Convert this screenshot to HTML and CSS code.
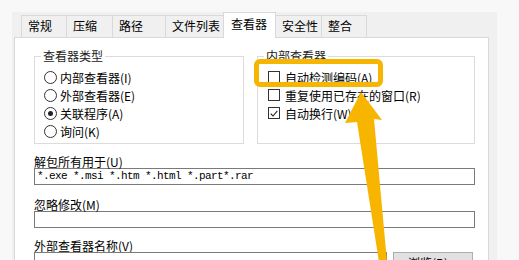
FILE: index.html
```html
<!DOCTYPE html>
<html lang="zh-CN">
<head>
<meta charset="utf-8">
<link rel="stylesheet" href="styles.css">
</head>
<body>
<div class="dialog">
  <div class="tabs">
    <div class="tab w45">常规</div>
    <div class="tab w46">压缩</div>
    <div class="tab w53">路径</div>
    <div class="tab w58">文件列表</div>
    <div class="tab w52 active">查看器</div>
    <div class="tab w46">安全性</div>
    <div class="tab w45">整合</div>
  </div>
  <div class="panel">
    <div class="groups">
      <fieldset class="group g1">
        <legend>查看器类型</legend>
        <div class="opt"><span class="radio"></span>内部查看器(I)</div>
        <div class="opt"><span class="radio"></span>外部查看器(E)</div>
        <div class="opt"><span class="radio on"></span>关联程序(A)</div>
        <div class="opt"><span class="radio"></span>询问(K)</div>
      </fieldset>
      <fieldset class="group g2">
        <legend>内部查看器</legend>
        <div class="opt"><span class="check"></span>自动检测编码(A)</div>
        <div class="opt"><span class="check"></span>重复使用已存在的窗口(R)</div>
        <div class="opt"><span class="check"><svg viewBox="0 0 12 12" width="11" height="11"><path d="M2 6.2 L4.8 9 L10 2.8" fill="none" stroke="#222" stroke-width="1.3"/></svg></span>自动换行(W)</div>
      </fieldset>
    </div>
    <div class="label l1">解包所有用于(U)</div>
    <div class="input mono">*.exe *.msi *.htm *.html *.part*.rar</div>
    <div class="label l2">忽略修改(M)</div>
    <div class="input"></div>
    <div class="label l3">外部查看器名称(V)</div>
    <div class="row">
      <div class="input short"></div>
      <div class="btn">浏览(B)...</div>
    </div>
  </div>
</div>
<div class="highlight"></div>
<svg class="arrow" width="519" height="260" viewBox="0 0 519 260">
  <polygon points="361,92 382,120 374,119 387,262 379,262 357,122 345,123" fill="#f7b500"/>
</svg>
</body>
</html>
```
FILE: styles.css
```css
* { box-sizing: border-box; }
html, body {
  margin: 0;
  padding: 0;
}
body {
  width: 519px;
  height: 260px;
  overflow: hidden;
  background: #f8f8f8;
  font-family: "Noto Sans CJK SC", "Noto Sans", sans-serif;
  font-size: 12px;
  color: #000;
  position: relative;
}
.dialog {
  margin: 12px 0 0 12px;
  width: 485px;
  height: 260px;
  background: #f0f0f0;
  padding: 0 8px 0 2px;
}
.tabs {
  display: flex;
  align-items: flex-end;
  height: 25px;
  margin-left: 7px;
  position: relative;
  z-index: 2;
}
.tab {
  height: 22px;
  border: 1px solid #d9d9d9;
  border-bottom: none;
  margin-right: -1px;
  padding-left: 6px;
  line-height: 20px;
  background: #f0f0f0;
  white-space: nowrap;
}
.tab.active {
  height: 26px;
  margin-bottom: -1px;
  background: #fff;
  line-height: 22px;
  padding-left: 7px;
}
.w45 { width: 46px; }
.w46 { width: 47px; }
.w52 { width: 53px; }
.w53 { width: 54px; }
.w58 { width: 59px; }
.panel {
  width: 475px;
  height: 240px;
  background: #fff;
  border: 1px solid #d9d9d9;
  padding: 11px 0 0 19px;
}
.groups {
  display: flex;
}
.group {
  margin: 0;
  border: 1px solid #dcdcdc;
  padding: 5px 0 3px 9px;
  min-width: 0;
}
.group legend {
  padding: 0 2px;
  line-height: 14px;
  color: #222;
}
.g1 { width: 210px; }
.g1 legend { margin-left: -3px; }
.g2 {
  width: 218px;
  margin-left: 13px;
  padding-left: 10px;
}
.g2 legend { margin-left: -4px; }
.opt {
  height: 18px;
  display: flex;
  align-items: center;
  white-space: nowrap;
}
.radio {
  width: 13px;
  height: 13px;
  border: 1px solid #333;
  border-radius: 50%;
  background: #fff;
  margin-right: 3px;
  display: flex;
  align-items: center;
  justify-content: center;
}
.radio.on::after {
  content: "";
  width: 5px;
  height: 5px;
  border-radius: 50%;
  background: #222;
}
.check {
  width: 12px;
  height: 12px;
  border: 1px solid #333;
  background: #fff;
  margin-right: 5px;
  display: flex;
  align-items: center;
  justify-content: center;
}
.check svg { display: block; }
.label {
  line-height: 13px;
  height: 13px;
  white-space: nowrap;
}
.l1 { margin-top: 11px; }
.l2 { margin-top: 13px; }
.l3 { margin-top: 11px; }
.input {
  width: 441px;
  height: 17px;
  border: 1px solid #7a7a7a;
  background: #fff;
  padding-left: 2px;
  line-height: 15px;
}
.mono {
  font-family: "Liberation Mono", monospace;
  font-size: 11px;
  letter-spacing: -0.6px;
  white-space: nowrap;
}
.row {
  display: flex;
  align-items: flex-start;
}
.input.short { width: 353px; }
.btn {
  width: 80px;
  height: 22px;
  margin-left: 6px;
  background: #e1e1e1;
  border: 1px solid #adadad;
  text-align: center;
  line-height: 20px;
}
.highlight {
  position: absolute;
  left: 254px;
  top: 59px;
  width: 129px;
  height: 28px;
  border: 5px solid #f6b500;
  border-radius: 6px;
}
.arrow {
  position: absolute;
  left: 0;
  top: 0;
  pointer-events: none;
}
```
